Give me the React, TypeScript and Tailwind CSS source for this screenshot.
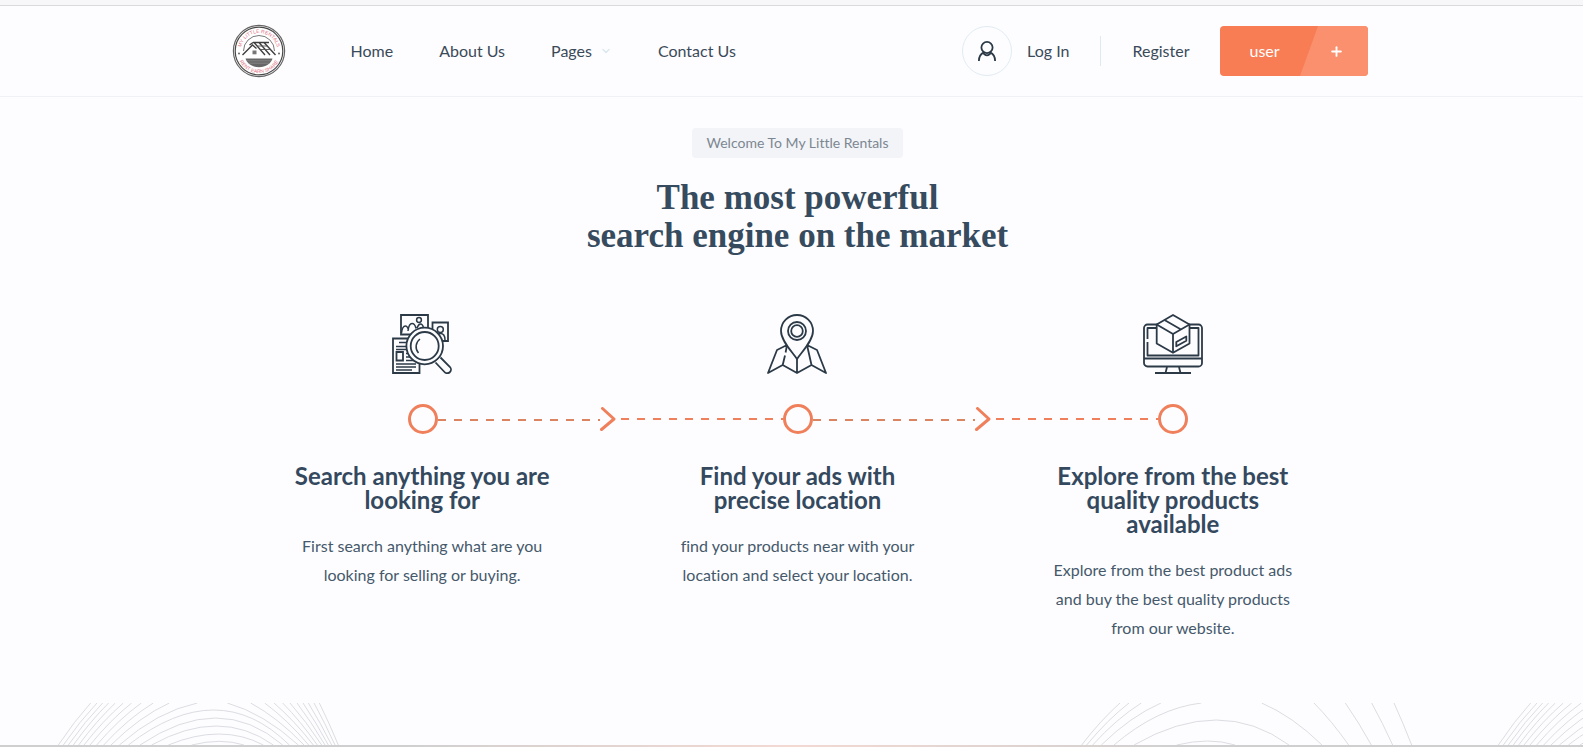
import type { ReactNode } from 'react';
import { ChevronDown, Plus } from 'lucide-react';

const INK = '#2c3a47';

type Step = {
  title: string;
  text: string;
  icon: ReactNode;
};

function Logo() {
  return (
    <svg viewBox="0 0 54 54" className="h-[54px] w-[54px]" role="img" aria-label="My Little Rentals">
      <defs>
        <path id="logo-top" d="M8.800 30A18.400 18.400 0 1 1 45.200 30" />
        <path id="logo-bottom" d="M4.900 27A22.100 22.100 0 0 0 49.100 27" />
      </defs>
      <circle cx="27" cy="27" r="25.600" fill="#fff" stroke="#666" strokeWidth="1.200" />
      <circle cx="27" cy="27" r="23.800" fill="none" stroke="#4a4a4a" strokeWidth="1.200" />
      <path d="M11.500 27a15.500 15.500 0 0 1 31 0" fill="none" stroke="#555" strokeWidth="0.800" />
      <g fill="#e0707f" fontFamily="Liberation Sans, sans-serif" fontSize="5" textAnchor="middle">
        <text>
          <textPath href="#logo-top" startOffset="50%">MY LITTLE RENTALS</textPath>
        </text>
        <text>
          <textPath href="#logo-bottom" startOffset="50%">RENT EARN SHARE</textPath>
        </text>
      </g>
      <circle cx="7" cy="29.500" r="1" fill="#666" />
      <circle cx="47" cy="29.500" r="1" fill="#666" />
      <path d="M13.500 34.500h27c-1.500 5-6.800 8.700-13.500 8.700s-12-3.700-13.500-8.700z" fill="#666" />
      <path d="M15 36.800h24M16.500 39.200h21" stroke="#999" strokeWidth="0.600" />
      <path d="M10.500 31L20.500 21l4 3.500M17.500 21l3.500-2.500M21 18.500h16M22 18.500L33 31M27 18.500L38 31M32 18.500L43.500 31" fill="none" stroke="#3f3f3f" strokeWidth="1.400" />
      <path d="M25 22h11M28.500 25.500h10" stroke="#555" strokeWidth="0.900" />
      <path d="M20.500 26.500h4v3.800h-4z" fill="#777" />
    </svg>
  );
}

function UserIcon() {
  return (
    <svg viewBox="0 0 20 22" className="h-[22px] w-5" fill="none" stroke={INK} strokeWidth="1.800" aria-hidden="true">
      <circle cx="10" cy="7.500" r="5.600" />
      <path d="M1.900 21c0-4 1.800-7.200 5-8.600M18.100 21c0-4-1.800-7.200-5-8.600M5.800 12.300c1.200 2.100 2.500 3 4.200 3s3-.900 4.200-3" />
    </svg>
  );
}

function SearchAdsIcon() {
  return (
    <svg viewBox="0 0 60 60" className="h-[60px] w-[60px]" fill="none" stroke={INK} strokeWidth="1.800" aria-hidden="true">
      <path d="M9 1h27v19.500H9z" />
      <circle cx="27" cy="6" r="2.400" strokeWidth="1.500" />
      <path d="M9.500 19c.500-4 2-7 3.800-7s2.700 2 3.200 4M16 17c.500-4.500 2-7.500 4-7.500s3.500 2.500 4 5M25 14c1-2.500 2-4 3.500-4s2.500 1.500 3 4" strokeWidth="1.500" />
      <path d="M40.500 8.500H56V27H40.500z" />
      <circle cx="48.300" cy="15.500" r="3" strokeWidth="1.500" />
      <path d="M43.500 26c0-4 1.800-6.500 4.800-6.500s4.700 2.500 4.700 6.500" strokeWidth="1.500" />
      <path d="M1 24.500h26.500V59H1zM4.500 38h6.500v8.500H4.500z" />
      <path d="M7 28.500h11M4 32.500h13M4 35.500h12M14 39.500h6M14 43h8M14 46.500h10M4 50h20M4 53h20M4 56h16" strokeWidth="1.400" />
      <circle cx="32.700" cy="32" r="18.300" fill="#fdfdff" />
      <circle cx="32.700" cy="32" r="14" />
      <path d="M28 25a9.500 9.500 0 0 0-1.500 14" strokeWidth="1.500" />
      <path d="M43.500 48.500L52.500 58a3.600 3.600 0 0 0 5.500-5L48.500 43.500" fill="#fdfdff" />
    </svg>
  );
}

function MapPinIcon() {
  return (
    <svg viewBox="0 0 60 60" className="h-[60px] w-[60px]" fill="none" stroke={INK} strokeWidth="1.800" strokeLinejoin="round" aria-hidden="true">
      <path d="M30 45C25.500 38 14 27 14 17a16 16 0 0 1 32 0c0 10-11.500 21-16 28z" />
      <circle cx="30" cy="17" r="9" />
      <circle cx="30" cy="17" r="5.800" />
      <path d="M20 31L10 36 1 59l14.700-8L30 59l14.500-8L59 59l-9-23-10-5M20 31l-1.400 7.500M18 41.500L15.700 51M30 45v14M40 31l4.500 20" />
    </svg>
  );
}

function MonitorBoxIcon() {
  return (
    <svg viewBox="0 0 60 60" className="h-[60px] w-[60px]" fill="none" stroke={INK} strokeWidth="1.800" strokeLinejoin="round" aria-hidden="true">
      <rect x="1" y="10.500" width="58" height="42" rx="3.500" />
      <path d="M1 44.500h58M15 14H4.500v11M4.500 28v13.500H55.500V14H45" />
      <path d="M24 53l-1.500 6M36 53l1.500 6M12 59h36" />
      <path d="M30 1l16.500 9.500v19L30 38.800l-16.300-9.300v-19z" fill="#fdfdff" />
      <path d="M13.700 10.500L30 20l16.500-9.500M30 20v18.800M21.500 6l16.500 9.500" />
      <path d="M33.300 28l10-5.500v4.300l-10 5.500z" />
    </svg>
  );
}

const STEPS: Step[] = [
  {
    title: 'Search anything you are looking for',
    text: 'First search anything what are you looking for selling or buying.',
    icon: <SearchAdsIcon />,
  },
  {
    title: 'Find your ads with precise location',
    text: 'find your products near with your location and select your location.',
    icon: <MapPinIcon />,
  },
  {
    title: 'Explore from the best quality products available',
    text: 'Explore from the best product ads and buy the best quality products from our website.',
    icon: <MonitorBoxIcon />,
  },
];

function Header() {
  return (
    <header className="border-b border-[#f0f1f5] pl-3">
      <div className="mx-auto flex h-[90px] max-w-[1140px] items-center">
        <a href="#" className="ml-1">
          <Logo />
        </a>
        <nav className="ml-[65px] flex items-center gap-[46px]">
          <a href="#">Home</a>
          <a href="#">About Us</a>
          <button type="button" className="flex items-center gap-2">
            Pages
            <ChevronDown className="h-3 w-3 text-[#dbe7ef]" strokeWidth={3} />
          </button>
          <a href="#">Contact Us</a>
        </nav>
        <div className="ml-auto flex items-center">
          <a href="#" className="flex items-center gap-[15px]">
            <span className="flex h-[50px] w-[50px] items-center justify-center rounded-full border border-[#e0ecf2]">
              <UserIcon />
            </span>
            Log In
          </a>
          <span className="mx-[31px] h-[30px] w-px bg-[#dfe9f0]" />
          <a href="#">Register</a>
          <button
            type="button"
            className="relative ml-[30px] flex h-[50px] w-[148px] items-center justify-between overflow-hidden rounded bg-[#f87c54] pr-6 pl-[30px] text-white"
          >
            <svg viewBox="0 0 68 50" className="absolute top-0 right-0 h-full" aria-hidden="true">
              <path d="M18 0h50v50H0z" fill="#fa906d" />
            </svg>
            <span>user</span>
            <Plus className="relative h-[15px] w-[15px]" strokeWidth={3} />
          </button>
        </div>
      </div>
    </header>
  );
}

function Dashes({ color }: { color: string }) {
  return (
    <svg className="h-[2px] w-full" aria-hidden="true">
      <line x1="0" y1="1" x2="100%" y2="1" stroke={color} strokeWidth="2" strokeDasharray="8 8" />
    </svg>
  );
}

function Connector({ first, last }: { first: boolean; last: boolean }) {
  return (
    <div className="relative mt-[30px] flex items-center">
      <div className="flex-1 pl-[11px]">{!first && <Dashes color="#ef805b" />}</div>
      <span className="h-[30px] w-[30px] rounded-full border-3 border-[#ef805b]" />
      <div className="flex-1 pt-px pr-[10px]">{!last && <Dashes color="#db8560" />}</div>
      {!last && (
        <svg viewBox="0 0 16 24" className="absolute -right-1.5 h-6 w-4" fill="none" stroke="#ef805b" strokeWidth="3" aria-hidden="true">
          <path d="M2.500 1.500L14 12 1.500 22.500" strokeLinecap="round" strokeLinejoin="round" />
        </svg>
      )}
    </div>
  );
}

// Contour lines. Each cut line is [bottom x, top x]; each arc is [left x, right x, peak y].
const WAVE_A = {
  left: [[175, 272], [190, 291], [205, 308], [220, 326], [236, 346], [252, 370], [270, 395], [290, 424], [311, 460], [333, 508], [358, 592]],
  right: [[1015, 958], [1005, 942], [995, 925], [985, 909], [975, 891], [965, 870], [952, 848], [940, 822], [926, 794], [912, 752], [895, 682]],
  arcs: [[385, 868, 21], [420, 848, 45], [455, 820, 69], [505, 790, 93], [575, 732, 115]],
};

const WAVE_B = {
  left: [[65, 180], [80, 207], [98, 244], [124, 303], [162, 424]],
  right: [[1055, 1002], [998, 935], [934, 856], [866, 762], [786, 605]],
  arcs: [[222, 687, 51], [350, 525, 114]],
};

function Wave({ lines, x }: { lines: typeof WAVE_A; x: number }) {
  // longer cut lines bend more
  const cut = ([bottom, top]: number[]) => {
    const span = top - bottom;
    const bend = (span / 234) ** 2 * 36;
    return `M${bottom} 126Q${bottom + span * 0.49} ${61 - bend} ${top} 0`;
  };
  return (
    <g transform={`translate(${x} 0)`}>
      {[...lines.left, ...lines.right].map((line) => (
        <path key={line.join()} d={cut(line)} />
      ))}
      {lines.arcs.map(([l, r, peak]) => (
        <path key={l} d={`M${l} 126Q${l + (r - l) * 0.56} ${2 * peak - 126} ${r} 126`} />
      ))}
    </g>
  );
}

export default function App() {
  return (
    <div className="min-h-screen overflow-hidden bg-[#fdfdff] font-['Lato','Liberation_Sans',sans-serif] text-base text-[#3b4a58] [font-variant-ligatures:none]">
      <div className="h-1.5 border-b border-[#dadadc] bg-[#f7f7f9]" />
      <Header />

      <main className="pt-[31px] pl-3">
        <div className="text-center">
          <span className="inline-block rounded bg-[#f3f4f8] px-[15px] text-sm leading-[30px] text-[#7c8791]">
            Welcome To My Little Rentals
          </span>
          <h1 className="mt-[21px] font-['Liberation_Serif',serif] text-[35px] leading-[38px] font-bold text-[#364b5e]">
            The most powerful
            <br />
            search engine on the market
          </h1>
        </div>

        <section className="mx-auto mt-[59px] grid max-w-[1126px] grid-cols-3">
          {STEPS.map((step, i) => (
            <article key={step.title} className="text-center">
              <div className="flex justify-center">{step.icon}</div>
              <Connector first={i === 0} last={i === STEPS.length - 1} />
              <div className="mx-auto max-w-[260px]">
                <h2 className="mt-[30px] text-2xl leading-6 font-bold text-[#34495e]">{step.title}</h2>
                <p className="mt-[19px] leading-[29px] text-[#45596b]">{step.text}</p>
              </div>
            </article>
          ))}
        </section>
      </main>

      <svg
        viewBox="0 0 4749 126"
        preserveAspectRatio="xMinYMin slice"
        className="mt-[61px] h-[42px] w-full"
        fill="none"
        stroke="#dcdde2"
        strokeWidth="3"
        aria-hidden="true"
      >
        <Wave lines={WAVE_A} x={0} />
        <Wave lines={WAVE_B} x={3180} />
        <Wave lines={WAVE_A} x={4320} />
      </svg>
      <div className="h-0.5 bg-linear-to-r from-[#cfcfd0] from-25% via-[#f3d9d2] to-[#cfcfd0] to-75%" />
    </div>
  );
}
